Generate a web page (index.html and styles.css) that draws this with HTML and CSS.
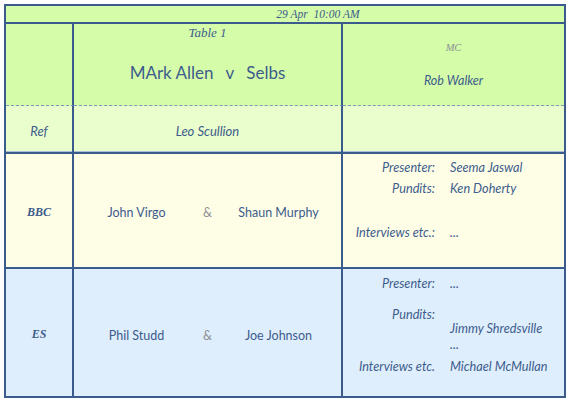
FILE: index.html
```html
<!DOCTYPE html>
<html>
<head>
<meta charset="utf-8">
<link rel="stylesheet" href="styles.css">
</head>
<body>
<div class="sched">
  <div class="cell date">29 Apr  10:00 AM</div>

  <div class="cell c1 head"></div>
  <div class="cell c2 head match">
    <div class="tbl">Table 1</div>
    <div class="players">MArk Allen<span class="vs">v</span>Selbs</div>
  </div>
  <div class="cell c3 head mc">
    <div class="mc-label">MC</div>
    <div class="mc-name">Rob Walker</div>
  </div>

  <div class="cell c1 ref mid"><span class="it">Ref</span></div>
  <div class="cell c2 ref mid"><span class="it">Leo Scullion</span></div>
  <div class="cell c3 ref"></div>

  <div class="cell c1 bbc mid"><span class="bc">BBC</span></div>
  <div class="cell c2 bbc names">
    <span>John Virgo</span><span class="amp">&amp;</span><span>Shaun Murphy</span>
  </div>
  <div class="cell c3 bbc crew crew-bbc">
    <div class="labels">
      <div>Presenter:</div>
      <div class="m5">Pundits:</div>
      <div class="m28">Interviews etc.:</div>
    </div>
    <div class="vals">
      <div>Seema Jaswal</div>
      <div class="m5">Ken Doherty</div>
      <div class="m28">...</div>
    </div>
  </div>

  <div class="cell c1 es mid es-mid"><span class="bc">ES</span></div>
  <div class="cell c2 es names es-names">
    <span>Phil Studd</span><span class="amp">&amp;</span><span>Joe Johnson</span>
  </div>
  <div class="cell c3 es crew crew-es">
    <div class="labels">
      <div>Presenter:</div>
      <div class="m15">Pundits:</div>
      <div class="m36">Interviews etc.</div>
    </div>
    <div class="vals">
      <div>...</div>
      <div class="m29">Jimmy Shredsville</div>
      <div>...</div>
      <div class="m6">Michael McMullan</div>
    </div>
  </div>
</div>
</body>
</html>
```

FILE: styles.css
```css
html, body {
  margin: 0;
  padding: 0;
  background: #ffffff;
}

.sched {
  margin: 4px;
  width: 562px;
  height: 394px;
  box-sizing: border-box;
  border: 2px solid #3b5b8c;
  display: grid;
  grid-template-columns: 68px 269px 221px;
  grid-template-rows: 18px 82px 48px 115px 127px;
  color: #3d5c8c;
  font-family: Lato, "Open Sans", sans-serif;
  font-size: 12.5px;
}

.cell {
  box-sizing: border-box;
  border-bottom: 2px solid #3b5b8c;
}

.c1, .c2 {
  border-right: 2px solid #3b5b8c;
}

.date {
  grid-column: 1 / -1;
  background: #d5fca9;
  font-family: "Liberation Serif", serif;
  font-style: italic;
  font-size: 11.5px;
  line-height: 16px;
  text-align: center;
  padding-left: 66px;
  white-space: pre;
}

.head {
  background: #d5fca9;
  border-bottom: 1px dashed #7f97b9;
}

.match {
  text-align: center;
  padding-top: 1px;
}

.tbl {
  font-family: "Liberation Serif", serif;
  font-style: italic;
  font-size: 13px;
  line-height: 16px;
}

.players {
  margin-top: 21px;
  font-size: 17px;
  line-height: 22px;
}

.vs {
  margin: 0 12px;
}

.mc {
  text-align: center;
  padding-top: 16px;
}

.mc-label {
  font-family: "Liberation Serif", serif;
  font-style: italic;
  font-size: 10.5px;
  line-height: 16px;
  color: #8a8f96;
}

.mc-name {
  margin-top: 17px;
  font-style: italic;
  line-height: 16px;
}

.ref {
  background: #eafdcc;
  box-shadow: inset 0 -1px 0 #a9bdd6;
}

.mid {
  display: flex;
  align-items: center;
  justify-content: center;
  padding-top: 3px;
}

.it {
  font-style: italic;
  font-size: 13px;
}

.bbc {
  background: #fefee7;
}

.es {
  background: #dfeefc;
  border-bottom: none;
}

.bc {
  font-family: "Liberation Serif", serif;
  font-style: italic;
  font-weight: bold;
  font-size: 12px;
}

.es-mid {
  padding-top: 4px;
}

.names {
  display: grid;
  grid-template-columns: repeat(3, 71px);
  justify-content: center;
  justify-items: center;
  align-content: center;
  white-space: nowrap;
  padding-top: 3px;
  font-size: 12.5px;
}

.es-names {
  padding-top: 5px;
}

.amp {
  color: #8e9094;
}

.crew {
  display: flex;
  font-style: italic;
  font-size: 12.7px;
  line-height: 16px;
  white-space: nowrap;
}

.crew-bbc {
  padding-top: 5px;
}

.crew-es {
  padding-top: 6px;
}

.labels {
  width: 92px;
  text-align: right;
}

.vals {
  margin-left: 15px;
}

.m5 { margin-top: 5px; }
.m6 { margin-top: 6px; }
.m15 { margin-top: 15px; }
.m28 { margin-top: 28px; }
.m29 { margin-top: 29px; }
.m36 { margin-top: 36px; }
```
